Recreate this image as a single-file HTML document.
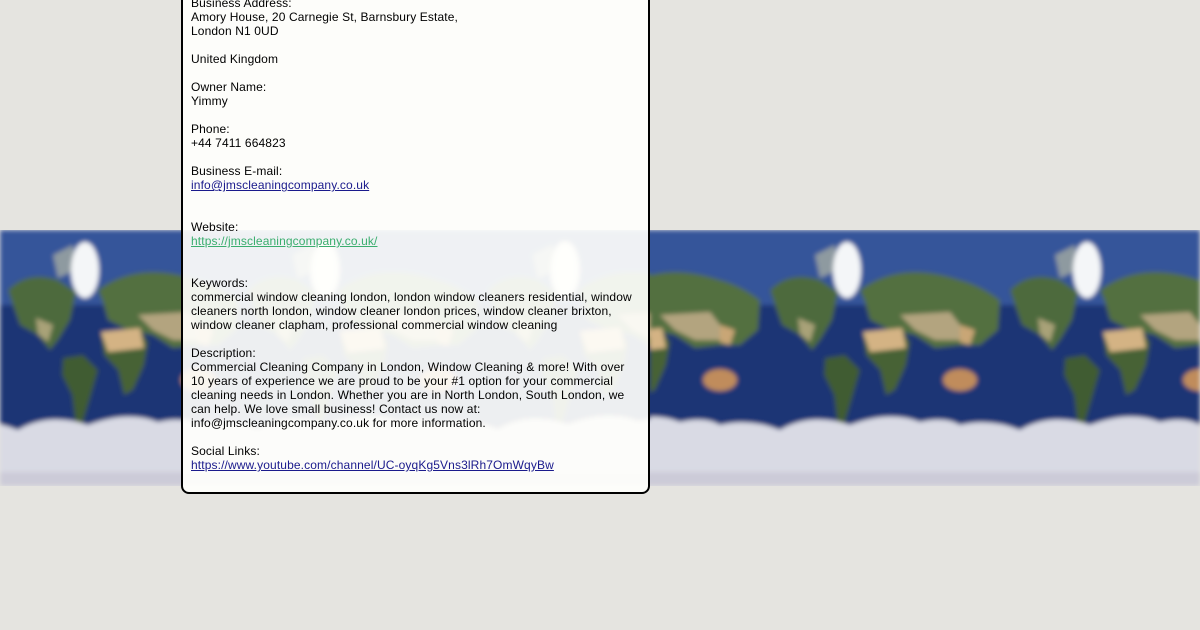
<!DOCTYPE html>
<html><head><meta charset="utf-8"><style>
html,body{margin:0;padding:0;width:1200px;height:630px;overflow:hidden;background:#e5e4e0;font-family:"Liberation Sans",Arial,sans-serif;}
.band{position:absolute;left:0;top:230px;width:1200px;height:256px;}
.box{position:absolute;left:181px;top:-20px;width:465px;height:510px;border:2px solid #000;border-radius:8px;background:rgba(255,255,252,0.92);}
.txt{position:absolute;left:191px;top:-4px;width:452px;font-size:12px;line-height:14px;color:#000;letter-spacing:0.12px;}
.txt p{margin:0 0 14px 0;}
a{color:#1a1a8c;text-decoration:underline;}
a.g{color:#3aae6e;}
</style></head><body>
<svg class="band" width="1200" height="256" viewBox="0 0 1200 256">
<defs>
<filter id="bl" x="0" y="0" width="1" height="1"><feGaussianBlur stdDeviation="2.5"/></filter>
<g id="tile">
<rect width="240" height="256" fill="#1f3474"/>
<rect width="240" height="75" fill="#34549a"/>
<path d="M50 60 Q70 40 100 50 L118 62 L112 90 L100 110 L92 120 L80 105 L62 95 L55 75Z" fill="#4d6a3c"/>
<path d="M78 88 L95 95 L90 112 L80 104Z" fill="#a9a278"/>
<path d="M95 25 L115 15 L118 40 L100 48Z" fill="#8e9aa0"/>
<ellipse cx="127" cy="40" rx="14" ry="28" fill="#f4f6f8"/>
<path d="M105 128 L125 125 L140 140 L132 168 L124 195 L118 198 L114 165 L104 145Z" fill="#3f5c30"/>
<path d="M140 60 Q180 30 240 50 L240 115 L215 118 L195 105 L170 100 L150 90 L145 72Z" fill="#53703f"/>
<path d="M0 50 Q20 55 40 70 L38 100 L20 115 L0 115Z" fill="#53703f"/>
<path d="M180 85 L230 82 L240 95 L240 110 L215 110 L195 100Z" fill="#b3a47f"/>
<path d="M0 95 L15 100 L10 115 L0 112Z" fill="#c9a676"/>
<path d="M143 102 L180 98 L190 112 L186 135 L175 160 L166 165 L160 140 L146 125Z" fill="#476236"/>
<path d="M143 102 L182 98 L186 118 L150 122Z" fill="#d4b384"/>
<ellipse cx="240" cy="150" rx="17" ry="11" fill="#c08c5c"/>
<ellipse cx="0" cy="150" rx="17" ry="11" fill="#c08c5c"/>
<path d="M0 195 Q30 188 60 200 Q90 182 130 195 Q170 180 200 192 Q225 186 240 195 L240 256 L0 256Z" fill="#d9dae4"/>
<rect y="242" width="240" height="14" fill="#cccbd8"/>
</g>
<pattern id="m1" x="-42" y="0" width="240" height="256" patternUnits="userSpaceOnUse"><use href="#tile"/></pattern>
<pattern id="m2" x="0" y="0" width="240" height="256" patternUnits="userSpaceOnUse"><use href="#tile"/></pattern>
</defs>
<g filter="url(#bl)">
<rect x="0" y="0" width="650" height="256" fill="url(#m1)"/>
<rect x="650" y="0" width="550" height="256" fill="url(#m2)"/>
</g>
</svg>
<div class="box"></div>
<div class="txt">
<p>Business Address:<br>Amory House, 20 Carnegie St, Barnsbury Estate,<br>London N1 0UD</p>
<p>United Kingdom</p>
<p>Owner Name:<br>Yimmy</p>
<p>Phone:<br>+44 7411 664823</p>
<p>Business E-mail:<br><a>info@jmscleaningcompany.co.uk</a><br>&nbsp;</p>
<p>Website:<br><a class="g">https://jmscleaningcompany.co.uk/</a><br>&nbsp;</p>
<p>Keywords:<br>commercial window cleaning london, london window cleaners residential, window<br>cleaners north london, window cleaner london prices, window cleaner brixton,<br>window cleaner clapham, professional commercial window cleaning</p>
<p>Description:<br>Commercial Cleaning Company in London, Window Cleaning &amp; more! With over<br>10 years of experience we are proud to be your #1 option for your commercial<br>cleaning needs in London. Whether you are in North London, South London, we<br>can help. We love small business! Contact us now at:<br>info@jmscleaningcompany.co.uk for more information.</p>
<p>Social Links:<br><a>https://www.youtube.com/channel/UC-oyqKg5Vns3lRh7OmWqyBw</a></p>
</div>
</body></html>
